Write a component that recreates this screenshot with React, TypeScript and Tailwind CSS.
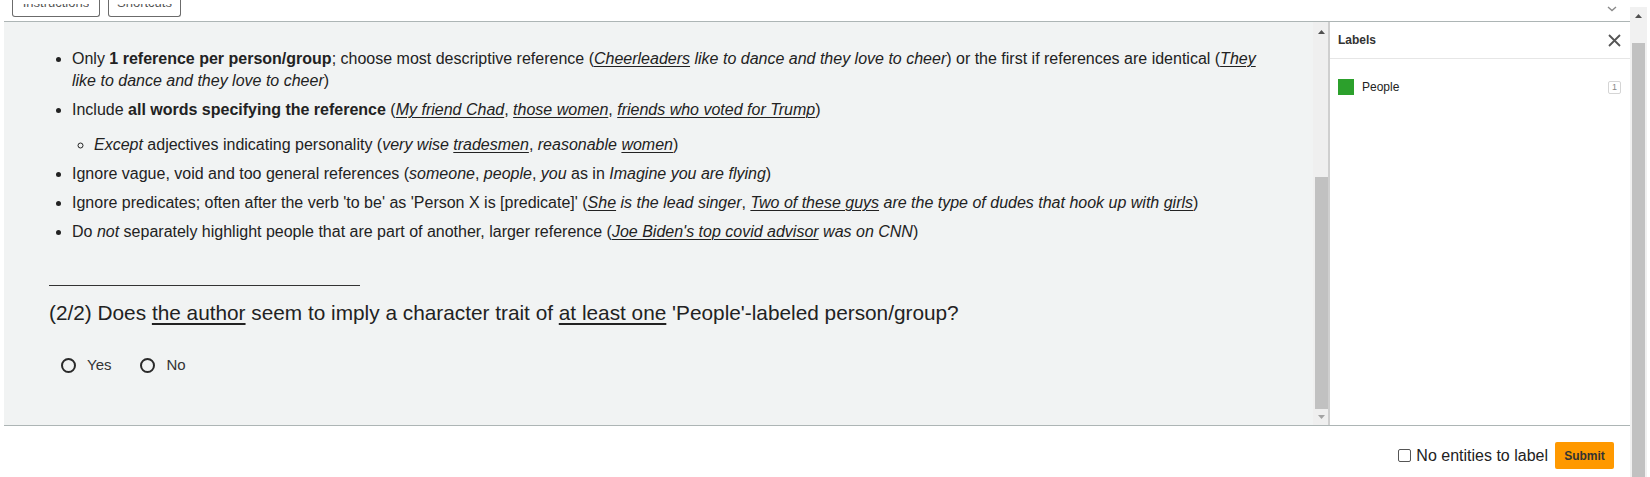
import React from "react";

const U = ({ children }: { children: React.ReactNode }) => (
  <span className="underline decoration-[1px] underline-offset-[2px]">{children}</span>
);

function TopButton({ label, width }: { label: string; width: string }) {
  return (
    <div
      className={`${width} h-[17px] border-x border-b border-[#6b6b6b] rounded-b-[3px] flex justify-center bg-white`}
    >
      <div className="mt-[4px] h-[4px] overflow-hidden flex flex-col">
        <span className="block -translate-y-[7px] text-[13px] leading-[12px] text-[#555]">{label}</span>
      </div>
    </div>
  );
}

function Radio({ label }: { label: string }) {
  return (
    <div className="flex items-center h-[22px]">
      <span className="w-[15px] h-[15px] rounded-full border-2 border-[#2a2a2a] bg-transparent box-border" />
      <span className="ml-[11px] text-[15px] text-[#333]">{label}</span>
    </div>
  );
}

export default function App() {
  return (
    <div
      className="w-[1650px] h-[477px] overflow-hidden flex bg-white text-[#222]"
      style={{ fontFamily: '"Liberation Sans", Arial, sans-serif' }}
    >
      {/* left column */}
      <div className="w-[1630px] flex flex-col">
        {/* top bar */}
        <div className="h-[21px] flex items-start justify-between pl-[12px] pr-[13px]">
          <div className="flex gap-[8px]">
            <TopButton label="Instructions" width="w-[88px]" />
            <TopButton label="Shortcuts" width="w-[73px]" />
          </div>
          <svg width="10" height="6" viewBox="0 0 10 6" className="mt-[6px]">
            <polyline points="1,1 5,4.5 9,1" fill="none" stroke="#8a8a8a" strokeWidth="1.4" />
          </svg>
        </div>

        {/* main area */}
        <div className="ml-[4px] h-[405px] border-y border-[#adb5b5] flex">
          {/* content pane */}
          <div className="flex-1 bg-[#f1f3f3] pl-[45px] pr-[45px] pt-[26px] overflow-hidden">
            <ul className="list-disc pl-[23px] text-[16px] leading-[22px] [&>li]:mb-[7px]">
              <li>
                Only <b>1 reference per person/group</b>; choose most descriptive reference (
                <i>
                  <U>Cheerleaders</U> like to dance and they love to cheer
                </i>
                ) or the first if references are identical (
                <i>
                  <U>They</U> like to dance and they love to cheer
                </i>
                )
              </li>
              <li>
                Include <b>all words specifying the reference</b> (
                <i>
                  <U>My friend Chad</U>
                </i>
                ,{" "}
                <i>
                  <U>those women</U>
                </i>
                ,{" "}
                <i>
                  <U>friends who voted for Trump</U>
                </i>
                )
                <ul className="list-[circle] pl-[22px] mt-[13px]">
                  <li>
                    <i>Except</i> adjectives indicating personality (
                    <i>
                      very wise <U>tradesmen</U>
                    </i>
                    ,{" "}
                    <i>
                      reasonable <U>women</U>
                    </i>
                    )
                  </li>
                </ul>
              </li>
              <li>
                Ignore vague, void and too general references (<i>someone</i>, <i>people</i>,{" "}
                <i>you</i> as in <i>Imagine you are flying</i>)
              </li>
              <li>
                Ignore predicates; often after the verb 'to be' as 'Person X is [predicate]' (
                <i>
                  <U>She</U> is the lead singer
                </i>
                ,{" "}
                <i>
                  <U>Two of these guys</U> are the type of dudes that hook up with <U>girls</U>
                </i>
                )
              </li>
              <li>
                Do <i>not</i> separately highlight people that are part of another, larger reference (
                <i>
                  <U>Joe Biden's top covid advisor</U> was on CNN
                </i>
                )
              </li>
            </ul>

            <div className="mt-[42px] w-[311px] h-px bg-[#333]" />

            <div className="mt-[15px] text-[20.8px] leading-[24px] text-[#222]">
              (2/2) Does{" "}
              <span className="underline decoration-2 underline-offset-[3px]">the author</span> seem to
              imply a character trait of{" "}
              <span className="underline decoration-2 underline-offset-[3px]">at least one</span>{" "}
              'People'-labeled person/group?
            </div>

            <div className="mt-[29px] ml-[12px] flex gap-[29px]">
              <Radio label="Yes" />
              <Radio label="No" />
            </div>
          </div>

          {/* inner scrollbar */}
          <div className="w-[15px] bg-[#efefef] flex flex-col items-stretch pl-[2px]">
            <div className="h-[20px] flex items-center justify-center">
              <svg width="7" height="4" viewBox="0 0 7 4">
                <polygon points="0,4 3.5,0 7,4" fill="#505050" />
              </svg>
            </div>
            <div className="h-[135px]" />
            <div className="h-[232px] bg-[#c1c1c1]" />
            <div className="h-[16px] flex items-center justify-center">
              <svg width="7" height="4" viewBox="0 0 7 4">
                <polygon points="0,0 3.5,4 7,0" fill="#a3a3a3" />
              </svg>
            </div>
          </div>
          <div className="w-[2px] bg-[#cfcfcf]" />

          {/* labels panel */}
          <div className="w-[300px] bg-white flex flex-col">
            <div className="h-[36px] border-b border-[#e6e6e6] flex items-center justify-between pl-[8px] pr-[9px] box-content">
              <span className="text-[12px] font-bold text-[#333]">Labels</span>
              <svg width="13" height="13" viewBox="0 0 13 13">
                <path d="M1 1 L12 12 M12 1 L1 12" stroke="#555" strokeWidth="1.8" />
              </svg>
            </div>
            <div className="pt-[20px] pl-[8px] pr-[9px]">
              <div className="h-[16px] flex items-center">
                <span className="w-[16px] h-[16px] bg-[#2ca02c]" />
                <span className="ml-[8px] text-[12px] text-[#222]">People</span>
                <span className="ml-auto w-[13px] h-[13px] border border-[#d5d5d5] rounded-[2px] flex items-center justify-center text-[9px] leading-none text-[#888]">
                  1
                </span>
              </div>
            </div>
          </div>
        </div>

        {/* bottom bar */}
        <div className="ml-[4px] flex justify-end items-center pr-[16px] pt-[16px]">
          <span className="w-[13px] h-[13px] border border-[#555] rounded-[2px] bg-white" />
          <span className="ml-[5px] text-[16px] text-[#222]">No entities to label</span>
          <button className="ml-[7px] w-[59px] h-[27px] bg-[#ff9900] rounded-[2px] text-[12px] font-bold text-[#333]">
            Submit
          </button>
        </div>
      </div>

      {/* page scrollbar */}
      <div className="w-[20px] flex flex-col">
        <div className="w-[17px] mt-[7px] flex-1 bg-[#f1f1f1] flex flex-col">
          <div className="h-[17px] flex items-center justify-center">
            <svg width="7" height="4" viewBox="0 0 7 4">
              <polygon points="0,4 3.5,0 7,4" fill="#505050" />
            </svg>
          </div>
          <div className="h-[19px]" />
          <div className="mx-[2px] flex-1 bg-[#c1c1c1]" />
        </div>
      </div>
    </div>
  );
}
